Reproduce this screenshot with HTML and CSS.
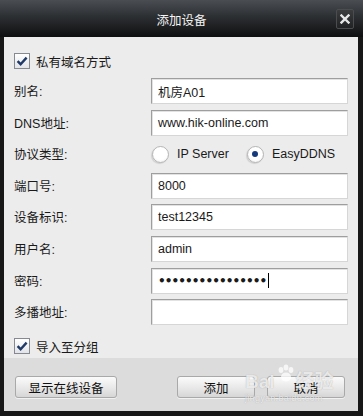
FILE: index.html
```html
<!DOCTYPE html>
<html lang="zh-CN">
<head>
<meta charset="utf-8">
<title>添加设备</title>
<link rel="stylesheet" href="styles.css">
</head>
<body>
<div class="window">
  <div class="titlebar">
    <span class="title">添加设备</span>
    <span class="close">
      <svg width="10" height="10" viewBox="0 0 10 10"><path d="M1.5 1.5 L8.5 8.5 M8.5 1.5 L1.5 8.5" stroke="#e6e6e6" stroke-width="2.4" stroke-linecap="square"/></svg>
    </span>
  </div>
  <div class="body">
    <div class="content">
      <div class="check-row">
        <span class="checkbox"><svg width="16" height="16" viewBox="0 0 16 16"><path d="M3.6 8.2 L6.6 11.2 L12.6 4.6" fill="none" stroke="#1f3a68" stroke-width="2.4"/></svg></span>
        <span>私有域名方式</span>
      </div>
      <div class="form">
        <span class="label">别名:</span>
        <div class="field">机房A01</div>
        <span class="label">DNS地址:</span>
        <div class="field">www.hik-online.com</div>
        <span class="label">协议类型:</span>
        <div class="radios">
          <span class="radio-opt"><span class="radio"></span>IP Server</span>
          <span class="radio-opt"><span class="radio on"><span class="dot"></span></span>EasyDDNS</span>
        </div>
        <span class="label">端口号:</span>
        <div class="field">8000</div>
        <span class="label">设备标识:</span>
        <div class="field">test12345</div>
        <span class="label">用户名:</span>
        <div class="field">admin</div>
        <span class="label">密码:</span>
        <div class="field pwd"><span class="dots">••••••••••••••••</span><span class="caret"></span></div>
        <span class="label">多播地址:</span>
        <div class="field"></div>
      </div>
      <div class="check-row group">
        <span class="checkbox"><svg width="16" height="16" viewBox="0 0 16 16"><path d="M3.6 8.2 L6.6 11.2 L12.6 4.6" fill="none" stroke="#1f3a68" stroke-width="2.4"/></svg></span>
        <span>导入至分组</span>
      </div>
    </div>
    <div class="footer">
      <span class="btn wide">显示在线设备</span>
      <div class="btn-group">
        <span class="btn">添加</span>
        <span class="btn">取消</span>
      </div>
    </div>
  </div>
  <div class="watermark">
    <span class="wm-main">Bai<svg class="paw" width="20" height="20" viewBox="0 0 20 20"><ellipse cx="5" cy="6" rx="2.4" ry="3" /><ellipse cx="10" cy="3.6" rx="2.4" ry="3"/><ellipse cx="15" cy="6" rx="2.4" ry="3"/><ellipse cx="10" cy="13" rx="5" ry="4.5"/></svg>经验</span>
    <span class="wm-sub">jingyan.baidu.com</span>
  </div>
</div>
</body>
</html>
```

FILE: styles.css
```css
* { box-sizing: border-box; }

body {
  margin: 0;
  font-family: "Liberation Sans", "Noto Sans CJK SC", sans-serif;
  font-size: 12.5px;
  color: #1a1a1a;
}

.window {
  position: relative;
  width: 363px;
  height: 416px;
  display: flex;
  flex-direction: column;
  background: #171717;
}

.titlebar {
  height: 37px;
  flex: none;
  display: grid;
  grid-template-columns: 1fr auto 1fr;
  align-items: center;
  background: linear-gradient(#4a4e53 0%, #2c2f32 45%, #0e0f10 100%);
  color: #f4f4f4;
}

.title {
  grid-column: 2;
  font-size: 12.5px;
  padding-top: 1px;
}

.close {
  grid-column: 3;
  justify-self: end;
  margin-right: 9px;
  margin-top: 1px;
  width: 18px;
  height: 20px;
  display: flex;
  align-items: center;
  justify-content: center;
  background: linear-gradient(#3a3c3e, #202224);
  border: 1px solid #4a4c4e;
  border-radius: 2px;
}

.body {
  flex: 1;
  margin: 0 5px 5px 4px;
  display: flex;
  flex-direction: column;
  background: #ececec;
}

.content {
  flex: 1;
  padding: 16px 10px 0 10px;
}

.check-row {
  display: flex;
  align-items: center;
  gap: 6px;
  height: 16px;
}

.check-row.group {
  margin-top: 13px;
}

.checkbox {
  width: 16px;
  height: 16px;
  display: block;
  border: 1px solid #858a92;
  background: linear-gradient(#ffffff, #e2e4e8);
  position: relative;
}

.checkbox svg {
  position: absolute;
  left: -1px;
  top: -1px;
}

.form {
  margin-top: 9px;
  display: grid;
  grid-template-columns: 137px 197px;
  grid-auto-rows: 26px;
  row-gap: 5.6px;
}

.label {
  display: flex;
  align-items: center;
  padding-bottom: 1px;
}

.field {
  display: flex;
  align-items: center;
  background: #fff;
  border: 1px solid;
  border-color: #9e9e9e #d6d6d6 #d6d6d6 #9e9e9e;
  box-shadow: inset 1px 1px 0 #e2e2e2;
  padding: 0 0 0 6px;
  white-space: nowrap;
  overflow: hidden;
}

.pwd .dots {
  font-family: "DejaVu Sans", sans-serif;
  font-size: 12px;
  letter-spacing: -0.9px;
  font-weight: bold;
}

.caret {
  display: block;
  width: 1px;
  height: 15px;
  background: #000;
  margin-left: 2px;
}

.radios {
  display: flex;
  align-items: center;
  padding-left: 1px;
  gap: 18px;
}

.radio-opt {
  display: flex;
  align-items: center;
  gap: 8px;
}

.radio {
  width: 17px;
  height: 17px;
  border-radius: 50%;
  border: 1px solid #b5b5b5;
  background: radial-gradient(circle at 50% 40%, #ffffff 55%, #e8e8e8 100%);
  box-shadow: -1px 1px 1px rgba(0,0,0,0.12);
  display: flex;
  align-items: center;
  justify-content: center;
}

.radio .dot {
  width: 6px;
  height: 6px;
  border-radius: 50%;
  background: #153a7c;
}

.footer {
  height: 53px;
  flex: none;
  background: #dcdcdc;
  display: flex;
  align-items: flex-start;
  justify-content: space-between;
  padding: 18px 13px 0 11px;
}

.btn-group {
  display: flex;
  gap: 12px;
}

.btn {
  height: 22px;
  width: 78px;
  display: flex;
  align-items: center;
  justify-content: center;
  border: 1px solid #a9a9a9;
  border-radius: 3px;
  background: linear-gradient(#fbfbfb, #e6e6e6 60%, #d6d6d6);
  box-shadow: 0 1px 0 rgba(255,255,255,0.6);
  color: #111;
}

.btn.wide {
  width: 102px;
}

.watermark {
  position: absolute;
  left: 245px;
  top: 360px;
  display: flex;
  flex-direction: column;
  align-items: flex-start;
  pointer-events: none;
  color: rgba(255,255,255,0.75);
  text-shadow: 0 0 1px rgba(120,120,120,0.6);
}

.wm-main {
  display: flex;
  align-items: flex-end;
  font-size: 19px;
  font-weight: bold;
  line-height: 20px;
  margin-top: 12px;
}

.paw {
  fill: rgba(255,255,255,0.75);
  margin: 0 0 0 1px;
  transform: translateY(-8px);
}

.wm-sub {
  font-size: 9px;
  line-height: 10px;
  margin-top: 1px;
  letter-spacing: 0.3px;
}
```
